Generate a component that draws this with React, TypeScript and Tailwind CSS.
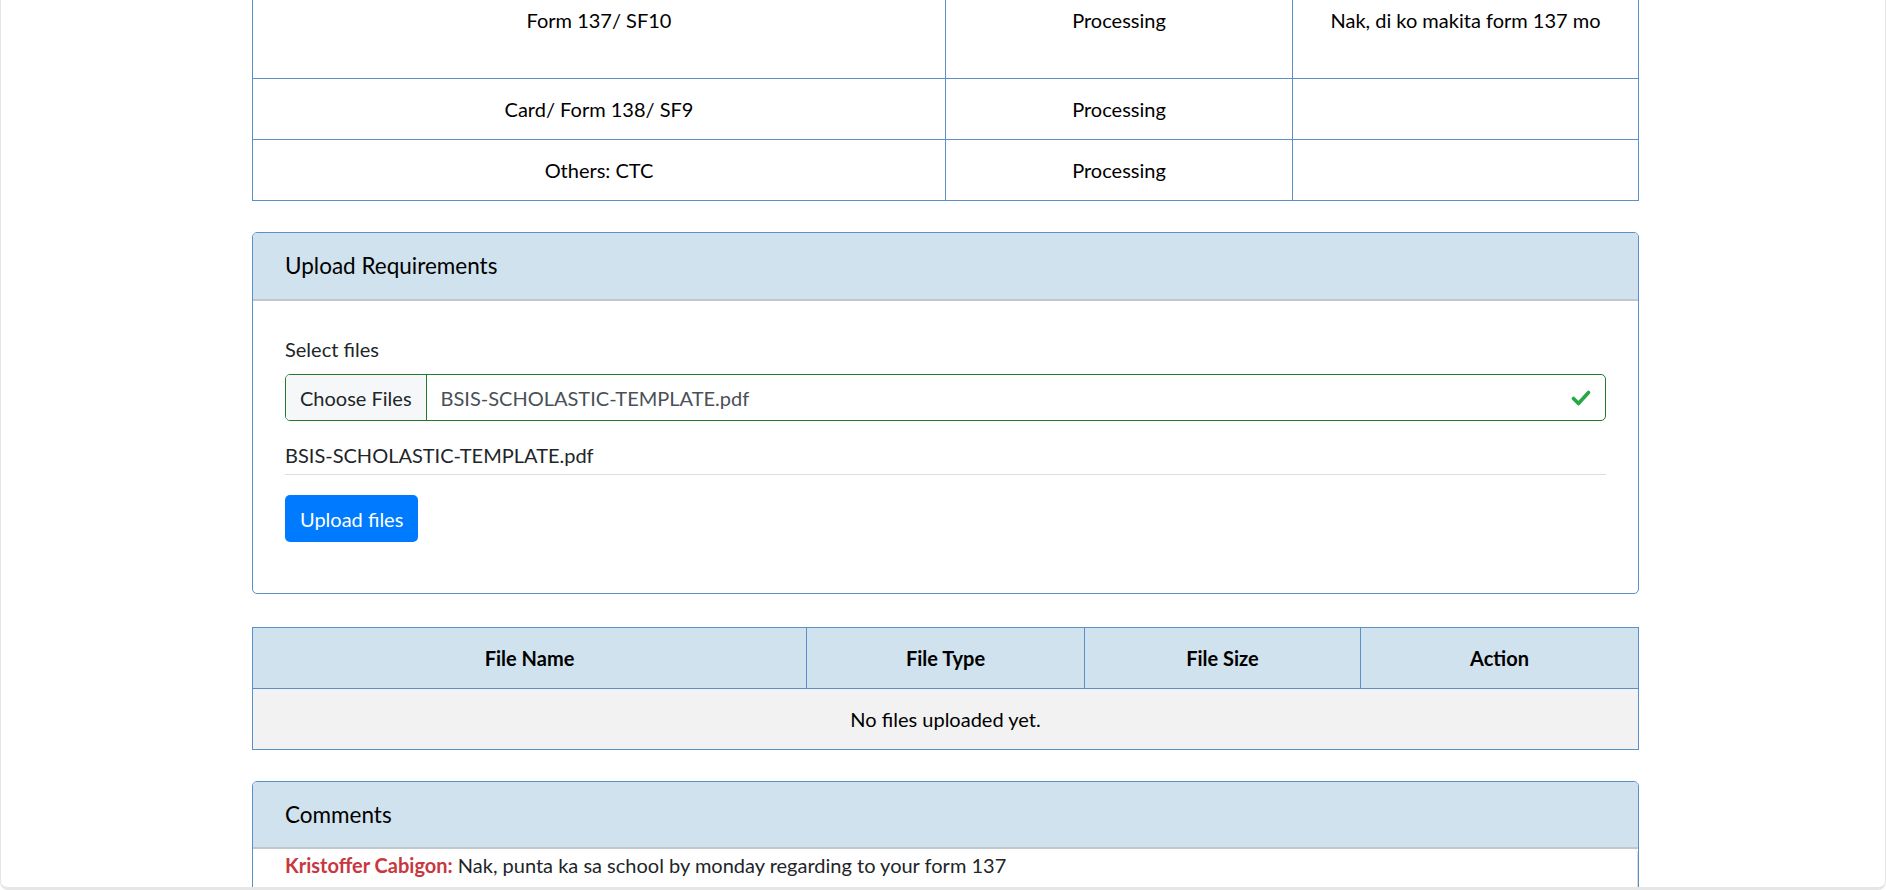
import React from "react";

const font = { fontFamily: "Lato, 'Noto Sans', 'Liberation Sans', sans-serif" };

function CheckIcon() {
  return (
    <svg width="20" height="18" viewBox="0 0 20 18" className="shrink-0">
      <polyline
        points="2.5,9.5 7.5,14.5 17.5,3.5"
        fill="none"
        stroke="#28a745"
        strokeWidth="3.6"
        strokeLinecap="round"
        strokeLinejoin="round"
      />
    </svg>
  );
}

export default function App() {
  const statusRows = [
    { doc: "Form 137/ SF10", status: "Processing", remark: "Nak, di ko makita form 137 mo", h: "h-[89px]" },
    { doc: "Card/ Form 138/ SF9", status: "Processing", remark: "", h: "h-[61px]" },
    { doc: "Others: CTC", status: "Processing", remark: "", h: "h-[61px]" },
  ];

  return (
    <div
      className="h-[890px] w-full overflow-hidden bg-white border-l border-r border-b-[3px] border-[#e6e6e6] rounded-b-[8px] text-[20px] leading-[30px] text-[#212529]"
      style={font}
    >
      <div className="ml-[251px] w-[1387px] -mt-[11px] flex flex-col">
        {/* Status table */}
        <table className="w-full border-collapse table-fixed text-black">
          <colgroup>
            <col className="w-[693px]" />
            <col className="w-[347px]" />
            <col />
          </colgroup>
          <tbody>
            {statusRows.map((r, i) => (
              <tr key={i} className={r.h}>
                <td className="border border-[#5b8fca] px-[15px] pt-[15px] align-top text-center">{r.doc}</td>
                <td className="border border-[#5b8fca] px-[15px] pt-[15px] align-top text-center">{r.status}</td>
                <td className="border border-[#5b8fca] px-[15px] pt-[15px] align-top text-center">{r.remark}</td>
              </tr>
            ))}
          </tbody>
        </table>

        {/* Upload Requirements card */}
        <div className="mt-[31px] border border-[#5b8fca] rounded-[5px] overflow-hidden">
          <div className="h-[68px] bg-[#d0e2ed] border-b-2 border-[#c2c7cc] px-[32px] flex items-center text-black text-[22.5px]">
            Upload Requirements
          </div>
          <div className="px-[32px] pt-[33px] pb-[51px]">
            <div className="mb-[10px]">Select files</div>
            <div className="h-[47px] flex items-stretch border border-[#237a2d] rounded-[5px] overflow-hidden">
              <div className="bg-[#f6f7f8] border-r border-[#237a2d] px-[14px] flex items-center text-[#212529]">
                Choose Files
              </div>
              <div className="flex-1 flex items-center px-[14px] text-[#495057]">BSIS-SCHOLASTIC-TEMPLATE.pdf</div>
              <div className="flex items-center pr-[14px]">
                <CheckIcon />
              </div>
            </div>
            <div className="mt-[19px] pb-[4px] border-b border-[#dedede]">BSIS-SCHOLASTIC-TEMPLATE.pdf</div>
            <button className="mt-[20px] h-[47px] px-[15px] bg-[#007bff] text-white rounded-[5px]">
              Upload files
            </button>
          </div>
        </div>

        {/* Files table */}
        <table className="mt-[33px] w-full border-collapse table-fixed text-black">
          <colgroup>
            <col className="w-[554px]" />
            <col className="w-[278px]" />
            <col className="w-[276px]" />
            <col />
          </colgroup>
          <thead>
            <tr className="h-[61px] bg-[#d0e2ed]">
              <th className="border border-[#5b8fca] font-bold text-center">File Name</th>
              <th className="border border-[#5b8fca] font-bold text-center">File Type</th>
              <th className="border border-[#5b8fca] font-bold text-center">File Size</th>
              <th className="border border-[#5b8fca] font-bold text-center">Action</th>
            </tr>
          </thead>
          <tbody>
            <tr className="h-[61px] bg-[#f2f2f2]">
              <td colSpan={4} className="border border-[#5b8fca] text-center">
                No files uploaded yet.
              </td>
            </tr>
          </tbody>
        </table>

        {/* Comments card */}
        <div className="mt-[31px] border border-[#5b8fca] rounded-[5px] overflow-hidden">
          <div className="h-[67px] bg-[#d0e2ed] border-b-2 border-[#c2c7cc] px-[32px] flex items-center text-black text-[22.5px]">
            Comments
          </div>
          <div className="px-[32px] pt-[1px] pb-[20px] border-r border-[#dcdcdc] rounded-tr-[5px]">
            <span className="font-bold text-[#c9373f]">Kristoffer Cabigon:</span> Nak, punta ka sa school by monday regarding to your form 137
          </div>
        </div>
      </div>
    </div>
  );
}
